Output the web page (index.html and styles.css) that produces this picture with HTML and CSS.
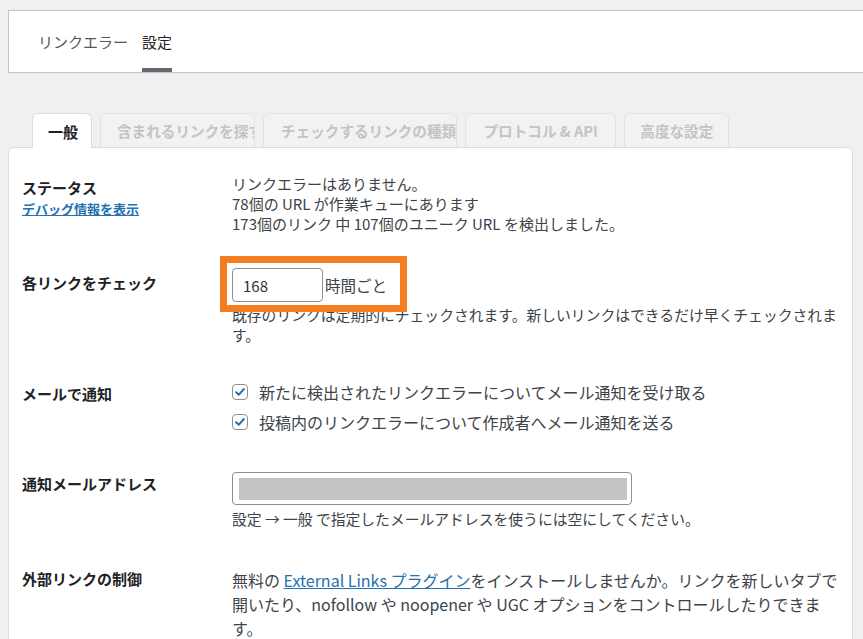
FILE: index.html
```html
<!DOCTYPE html>
<html lang="ja">
<head>
<meta charset="utf-8">
<title>設定</title>
<link rel="stylesheet" href="styles.css">
</head>
<body>
<div class="page">
  <header class="topbar">
    <nav class="topnav">
      <span class="topnav-item">リンクエラー</span>
      <span class="topnav-item topnav-item--active">設定</span>
    </nav>
  </header>

  <div class="tabs">
    <div class="tab tab--active">一般</div>
    <div class="tab tab--w155">含まれるリンクを探す</div>
    <div class="tab tab--w194">チェックするリンクの種類</div>
    <div class="tab tab--roomy">プロトコル &amp; API</div>
    <div class="tab">高度な設定</div>
  </div>

  <section class="panel">
    <div class="row row--status">
      <div class="row-label label-offset-3">
        <div class="label">ステータス</div>
        <a class="debug-link" href="#">デバッグ情報を表示</a>
      </div>
      <div class="row-value status-text">
        <div>リンクエラーはありません。</div>
        <div>78個の URL が作業キューにあります</div>
        <div>173個のリンク 中 107個のユニーク URL を検出しました。</div>
      </div>
    </div>

    <div class="row row--interval">
      <div class="row-label label-offset-4"><div class="label">各リンクをチェック</div></div>
      <div class="row-value">
        <div class="interval">
          <input class="text-input text-input--short" type="text" value="168">
          <span class="interval-unit">時間ごと</span>
          <span class="highlight-box"></span>
        </div>
        <p class="description">既存のリンクは定期的にチェックされます。新しいリンクはできるだけ早くチェックされます。</p>
      </div>
    </div>

    <div class="row row--notify">
      <div class="row-label label-offset-6"><div class="label">メールで通知</div></div>
      <div class="row-value">
        <label class="check-line">
          <span class="checkbox"><svg viewBox="0 0 16 16" width="16" height="16"><path d="M3.6 8.2 L6.6 11.2 L12.4 4.6" fill="none" stroke="#2271b1" stroke-width="2.3" stroke-linecap="round" stroke-linejoin="round"/></svg></span>
          <span>新たに検出されたリンクエラーについてメール通知を受け取る</span>
        </label>
        <label class="check-line">
          <span class="checkbox"><svg viewBox="0 0 16 16" width="16" height="16"><path d="M3.6 8.2 L6.6 11.2 L12.4 4.6" fill="none" stroke="#2271b1" stroke-width="2.3" stroke-linecap="round" stroke-linejoin="round"/></svg></span>
          <span>投稿内のリンクエラーについて作成者へメール通知を送る</span>
        </label>
      </div>
    </div>

    <div class="row row--email">
      <div class="row-label label-offset-1"><div class="label">通知メールアドレス</div></div>
      <div class="row-value">
        <div class="email-input"><div class="email-redact"></div></div>
        <p class="description description--email">設定 → 一般 で指定したメールアドレスを使うには空にしてください。</p>
      </div>
    </div>

    <div class="row row--external">
      <div class="row-label"><div class="label">外部リンクの制御</div></div>
      <div class="row-value external-text">無料の <a class="ext-link" href="#">External Links プラグイン</a>をインストールしませんか。リンクを新しいタブで開いたり、nofollow や noopener や UGC オプションをコントロールしたりできます。</div>
    </div>
  </section>
</div>
</body>
</html>
```

FILE: styles.css
```css
html, body {
  margin: 0;
  padding: 0;
}

body {
  background: #f0f0f1;
  font-family: "Noto Sans CJK JP", "Noto Sans", sans-serif;
  color: #3c434a;
  overflow: hidden;
  width: 863px;
  height: 639px;
}

.page {
  padding-left: 8px;
  padding-top: 10px;
}

/* top header */
.topbar {
  width: 870px;
  height: 63px;
  box-sizing: border-box;
  background: #fff;
  border: 1px solid #c3c4c7;
  border-right: none;
}

.topnav {
  display: flex;
  height: 100%;
  padding-left: 29px;
  gap: 14px;
}

.topnav-item {
  box-sizing: border-box;
  height: 100%;
  display: flex;
  align-items: center;
  padding-top: 4px;
  border-bottom: 4px solid transparent;
  font-size: 15px;
  color: #50575e;
}

.topnav-item--active {
  color: #1d2327;
  border-bottom-color: #646970;
}

/* settings tabs */
.tabs {
  display: flex;
  gap: 8px;
  margin-top: 40px;
  padding-left: 24px;
  position: relative;
  z-index: 2;
}

.tab {
  box-sizing: border-box;
  height: 34px;
  padding: 0 15px;
  display: flex;
  align-items: center;
  font-size: 14.6px;
  font-weight: 700;
  color: #c3c4c7;
  background: #f2f2f2;
  border: 1px solid #e3e3e4;
  border-bottom: none;
  border-radius: 6px 6px 0 0;
  white-space: nowrap;
  overflow: hidden;
}

.tab--active {
  width: 60px;
  font-size: 15px;
  color: #1d2327;
  background: #fff;
  border-color: #dcdcde;
  height: 35px;
  margin-bottom: -1px;
}

.tab--w155 {
  width: 155px;
  padding-right: 0;
  padding-left: 16px;
}

.tab--w194 {
  width: 194px;
  padding-right: 0;
  padding-left: 17px;
}

.tab--roomy {
  padding: 0 17.5px;
}

/* panel */
.panel {
  width: 845px;
  box-sizing: border-box;
  background: #fff;
  border: 1px solid #dcdcde;
  border-radius: 6px 6px 0 0;
  padding: 11px 8px 40px 13px;
  position: relative;
  z-index: 1;
}

.row {
  display: grid;
  grid-template-columns: 210px 612px;
}

.row--status { padding: 15px 0 15px; }
.row--interval { padding: 19px 0 15px; }
.row--notify { padding: 17px 0 20px; }
.row--email { padding: 15px 0 15px; }
.row--external { padding: 24px 0 15px; }

.label {
  font-size: 15px;
  font-weight: 700;
  line-height: 22px;
  color: #1d2327;
}

.label-offset-1 { padding-top: 1px; }
.label-offset-3 { padding-top: 3px; }
.label-offset-4 { padding-top: 4px; }
.label-offset-6 { padding-top: 6px; }

.debug-link {
  display: block;
  font-size: 13px;
  font-weight: 700;
  line-height: 20px;
  color: #2271b1;
  text-decoration: underline;
}

.status-text {
  font-size: 15px;
  line-height: 20px;
}

.interval {
  display: inline-flex;
  align-items: center;
  position: relative;
  gap: 2px;
}

.text-input {
  box-sizing: border-box;
  font-family: inherit;
  font-size: 15px;
  color: #2c3338;
  border: 1px solid #8c8f94;
  border-radius: 4px;
  background: #fff;
  margin: 0;
  outline: none;
}

.text-input--short {
  width: 91px;
  height: 34px;
  padding: 0 10px;
}

.interval-unit {
  font-size: 15.5px;
  line-height: 20px;
  color: #3c434a;
}

.highlight-box {
  position: absolute;
  left: -12px;
  top: -12px;
  right: -20px;
  bottom: -10px;
  border: 7px solid #f47d20;
  z-index: 3;
}

.description {
  margin: 3px 0 0;
  font-size: 14.8px;
  line-height: 20px;
  color: #3c434a;
}

.description--email {
  margin-top: 4px;
}

.check-line {
  display: flex;
  align-items: center;
  gap: 11px;
  height: 30px;
  font-size: 16px;
  color: #3c434a;
}

.checkbox {
  box-sizing: border-box;
  width: 16px;
  height: 16px;
  border: 1px solid #8c8f94;
  border-radius: 4px;
  background: #fff;
  display: flex;
  align-items: center;
  justify-content: center;
  flex: none;
}

.checkbox svg {
  display: block;
  width: 14px;
  height: 14px;
}

.email-input {
  box-sizing: border-box;
  width: 400px;
  height: 33px;
  border: 1px solid #8c8f94;
  border-radius: 4px;
  background: #fff;
  padding: 5px 4px 4px 6px;
}

.email-redact {
  height: 100%;
  background: #c4c4c4;
}

.external-text {
  font-size: 16px;
  line-height: 24px;
  color: #3c434a;
}

.ext-link {
  color: #2271b1;
  text-decoration: underline;
}
```
